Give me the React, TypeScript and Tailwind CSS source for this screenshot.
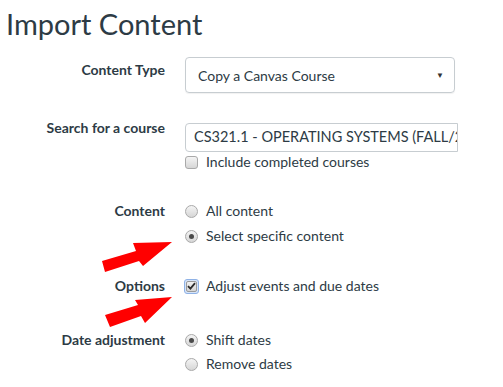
import React from 'react';

function Radio({ checked }: { checked?: boolean }) {
  return (
    <span className="flex h-[13px] w-[13px] shrink-0 items-center justify-center rounded-full border border-[#a9a9a9] bg-gradient-to-b from-[#f4f4f4] to-[#d6d6d6]">
      {checked && <span className="h-[5px] w-[5px] rounded-full bg-[#4a4a4a]" />}
    </span>
  );
}

function Checkbox({ checked }: { checked?: boolean }) {
  if (checked) {
    return (
      <span className="flex h-[15px] w-[15px] shrink-0 items-center justify-center rounded-[3px] border border-[#8fb2e6] bg-[#d6e4f8]">
        <span className="flex h-[11px] w-[11px] items-center justify-center rounded-[2px] border border-[#9a9a9a] bg-gradient-to-b from-[#f2f2f2] to-[#d4d4d4]">
          <svg width="9" height="8" viewBox="0 0 9 8">
            <path d="M1 4.2 L3.4 6.6 L8 1.2" stroke="#2b2b2b" strokeWidth="1.8" fill="none" />
          </svg>
        </span>
      </span>
    );
  }
  return (
    <span className="h-[13px] w-[13px] shrink-0 rounded-[3px] border border-[#a9a9a9] bg-gradient-to-b from-[#f4f4f4] to-[#d6d6d6]" />
  );
}

function Label({ children, className = '' }: { children: React.ReactNode; className?: string }) {
  return (
    <div className={`w-[165px] shrink-0 text-right text-[14px] font-bold leading-[20px] text-[#2d3b45] ${className}`}>
      {children}
    </div>
  );
}

function Option({ children, control }: { children: React.ReactNode; control: React.ReactNode }) {
  return (
    <div className="flex h-[20px] items-center gap-[8px] text-[14px] leading-[20px] text-[#2d3b45]">
      <span className="flex w-[13px] justify-center">{control}</span>
      <span>{children}</span>
    </div>
  );
}

export default function App() {
  return (
    <div className="relative h-[387px] w-[503px] overflow-hidden bg-white font-['Lato','Liberation_Sans',sans-serif]">
      <h1 className="pl-[6px] pt-[6px] text-[29px] font-normal leading-[36px] text-[#2d3b45]">Import Content</h1>

      {/* Content Type */}
      <div className="mt-[15px] flex items-start gap-[20px]">
        <Label className="pt-[3px]">Content Type</Label>
        <div className="flex h-[36px] w-[270px] items-center justify-between rounded-[4px] border border-[#c7cdd1] pl-[12px] pr-[10px] text-[14px] text-[#2d3b45] shadow-[0_1px_1px_rgba(0,0,0,0.06)]">
          <span>Copy a Canvas Course</span>
          <span className="text-[8px] text-[#333]">▼</span>
        </div>
      </div>

      {/* Search */}
      <div className="mt-[30px] flex items-start gap-[20px]">
        <Label className="mt-[-5px]">Search for a course</Label>
        <div className="flex flex-col">
          <input
            readOnly
            value="CS321.1 - OPERATING SYSTEMS (FALL/2017)"
            className="h-[29px] w-[273px] rounded-l-[4px] border border-[#c7cdd1] pb-[3px] pl-[8px] pr-0 text-[14.5px] text-[#2d3b45] outline-none"
          />
          <Option control={<Checkbox />}>Include completed courses</Option>
        </div>
      </div>

      {/* Content */}
      <div className="mt-[29px] flex items-start gap-[20px]">
        <Label>Content</Label>
        <div className="flex flex-col gap-[5px]">
          <Option control={<Radio />}>All content</Option>
          <Option control={<Radio checked />}>Select specific content</Option>
        </div>
      </div>

      {/* Options */}
      <div className="mt-[30px] flex items-start gap-[20px]">
        <Label>Options</Label>
        <Option control={<Checkbox checked />}>Adjust events and due dates</Option>
      </div>

      {/* Date adjustment */}
      <div className="mt-[34px] flex items-start gap-[20px]">
        <Label>Date adjustment</Label>
        <div className="flex flex-col gap-[4px]">
          <Option control={<Radio checked />}>Shift dates</Option>
          <Option control={<Radio />}>Remove dates</Option>
        </div>
      </div>

      {/* red annotation arrows */}
      <svg className="pointer-events-none absolute left-0 top-0" width="503" height="387" viewBox="0 0 503 387">
        <polygon points="102,261 136,251 133,243 172,242 143,266 139,261 105,272" fill="#ff0000" />
        <polygon points="105,315 138,305 135,300 172,297 145,323 141,316 110,327" fill="#ff0000" />
      </svg>
    </div>
  );
}
